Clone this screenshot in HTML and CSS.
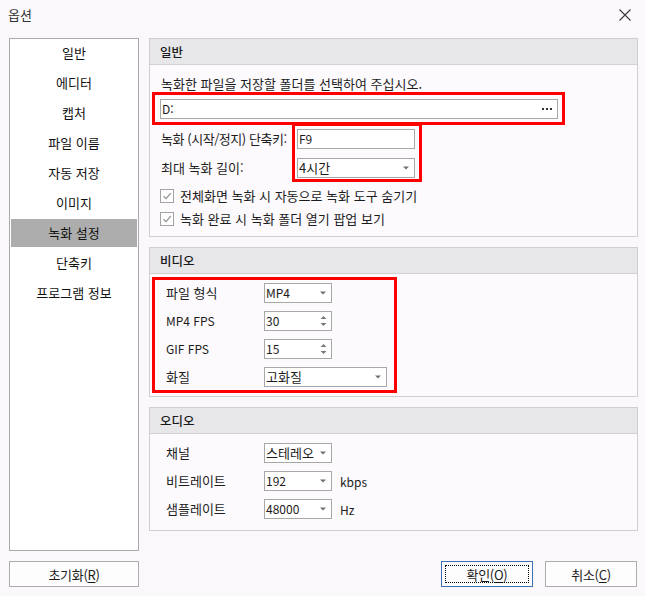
FILE: index.html
```html
<!DOCTYPE html>
<html lang="ko">
<head>
<meta charset="utf-8">
<title>옵션</title>
<link rel="stylesheet" href="styles.css">
</head>
<body>
<div class="window">
  <div class="titlebar">
    <span class="title">옵션</span>
    <svg class="close" width="12" height="12" viewBox="0 0 12 12"><path d="M0.5 0.5 L11.5 11.5 M11.5 0.5 L0.5 11.5" stroke="#3a3a3a" stroke-width="1.1" fill="none"/></svg>
  </div>
  <div class="main">
    <ul class="nav">
      <li>일반</li>
      <li>에디터</li>
      <li>캡처</li>
      <li>파일 이름</li>
      <li>자동 저장</li>
      <li>이미지</li>
      <li class="active">녹화 설정</li>
      <li>단축키</li>
      <li>프로그램 정보</li>
    </ul>
    <div class="content">
      <section class="group">
        <div class="group-head">일반</div>
        <div class="group-body body-general">
          <div class="hint">녹화한 파일을 저장할 폴더를 선택하여 주십시오.</div>
          <div class="mark mark-path">
            <div class="field path-field"><span>D:</span>
              <svg class="dots" width="10" height="2" viewBox="0 0 10 2"><rect x="0" y="0" width="2" height="2" fill="#333"/><rect x="4" y="0" width="2" height="2" fill="#333"/><rect x="8" y="0" width="2" height="2" fill="#333"/></svg>
            </div>
          </div>
          <div class="hotkey-row">
            <div class="hotkey-labels">
              <div class="tight">녹화 (시작/정지) 단축키:</div>
              <div>최대 녹화 길이:</div>
            </div>
            <div class="mark mark-hotkey">
              <div class="field">F9</div>
              <div class="field"><span class="ko">4시간</span><svg class="caret" width="6" height="4" viewBox="0 0 6 4"><path d="M0 0.5 H6 L3 3.5 Z" fill="#707070"/></svg></div>
            </div>
          </div>
          <div class="check"><span class="box"><svg width="12" height="12" viewBox="0 0 12 12"><path d="M2.5 6.2 L5 8.7 L9.8 3.2" stroke="#8a8a8a" stroke-width="1.1" fill="none"/></svg></span><span>전체화면 녹화 시 자동으로 녹화 도구 숨기기</span></div>
          <div class="check"><span class="box"><svg width="12" height="12" viewBox="0 0 12 12"><path d="M2.5 6.2 L5 8.7 L9.8 3.2" stroke="#8a8a8a" stroke-width="1.1" fill="none"/></svg></span><span>녹화 완료 시 녹화 폴더 열기 팝업 보기</span></div>
        </div>
      </section>

      <section class="group">
        <div class="group-head">비디오</div>
        <div class="group-body body-video">
          <div class="mark mark-video">
            <div class="row"><span class="row-label">파일 형식</span><div class="field w68"><span>MP4</span><svg class="caret" width="6" height="4" viewBox="0 0 6 4"><path d="M0 0.5 H6 L3 3.5 Z" fill="#707070"/></svg></div></div>
            <div class="row"><span class="row-label latin">MP4 FPS</span><div class="field w68"><span>30</span><svg class="spin" width="7" height="12" viewBox="0 0 7 12"><path d="M0.5 4 L3.5 1 L6.5 4 Z M0.5 8 L3.5 11 L6.5 8 Z" fill="#7a7a7a"/></svg></div></div>
            <div class="row"><span class="row-label latin">GIF FPS</span><div class="field w68"><span>15</span><svg class="spin" width="7" height="12" viewBox="0 0 7 12"><path d="M0.5 4 L3.5 1 L6.5 4 Z M0.5 8 L3.5 11 L6.5 8 Z" fill="#7a7a7a"/></svg></div></div>
            <div class="row"><span class="row-label">화질</span><div class="field w123"><span class="ko">고화질</span><svg class="caret" width="6" height="4" viewBox="0 0 6 4"><path d="M0 0.5 H6 L3 3.5 Z" fill="#707070"/></svg></div></div>
          </div>
        </div>
      </section>

      <section class="group">
        <div class="group-head">오디오</div>
        <div class="group-body body-audio">
          <div class="row"><span class="row-label">채널</span><div class="field w68"><span class="ko">스테레오</span><svg class="caret" width="6" height="4" viewBox="0 0 6 4"><path d="M0 0.5 H6 L3 3.5 Z" fill="#707070"/></svg></div></div>
          <div class="row"><span class="row-label">비트레이트</span><div class="field w68"><span>192</span><svg class="caret" width="6" height="4" viewBox="0 0 6 4"><path d="M0 0.5 H6 L3 3.5 Z" fill="#707070"/></svg></div><span class="unit">kbps</span></div>
          <div class="row"><span class="row-label">샘플레이트</span><div class="field w68"><span>48000</span><svg class="caret" width="6" height="4" viewBox="0 0 6 4"><path d="M0 0.5 H6 L3 3.5 Z" fill="#707070"/></svg></div><span class="unit">Hz</span></div>
        </div>
      </section>
    </div>
  </div>
  <div class="footer">
    <button class="btn btn-reset">초기화(<u>R</u>)</button>
    <div class="footer-right">
      <button class="btn btn-primary">확인(<u>O</u>)</button>
      <button class="btn">취소(<u>C</u>)</button>
    </div>
  </div>
</div>
</body>
</html>
```

FILE: styles.css
```css
* { box-sizing: border-box; margin: 0; padding: 0; }
html, body { width: 645px; height: 596px; overflow: hidden; }
body {
  background: #faf8fa;
  font-family: "Noto Sans CJK KR", "Noto Sans", sans-serif;
  font-size: 13px;
  color: #1c1c1c;
}
.window { display: flex; flex-direction: column; height: 596px; }

.titlebar {
  height: 38px;
  display: flex;
  justify-content: space-between;
  align-items: flex-start;
  padding: 7px 14px 0 8px;
}
.title { line-height: 16px; color: #333; }
.close { margin-top: 2px; display: block; }

.main { display: flex; gap: 10px; padding-left: 9px; height: 513px; }
.nav {
  width: 130px;
  border: 1px solid #ababab;
  background: #fff;
  list-style: none;
  padding: 0 1px;
}
.nav li {
  height: 28px;
  line-height: 28px;
  margin-bottom: 2px;
  text-align: center;
  color: #111;
}
.nav li.active { background: #adadad; }

.content { width: 489px; display: flex; flex-direction: column; gap: 10px; }
.group { border: 1px solid #cfcfd3; background: #fcfafc; }
.group-head {
  height: 26px;
  line-height: 25px;
  padding-left: 10px;
  background: #e7e6e9;
  border-bottom: 1px solid #d2d1d5;
  color: #1a1a1a;
  font-size: 12.5px;
  font-weight: 500;
}

.mark { border: 3px solid #ff0000; }

.field {
  height: 20px;
  border: 1px solid #a8a8a8;
  background: #fff;
  line-height: 18px;
  padding-left: 1px;
  display: flex;
  align-items: center;
  white-space: nowrap;
  font-size: 12px;
}
.field span { flex: 1; }
.field .ko { font-size: 13px; }
.caret { margin-right: 5px; display: block; }
.spin { margin-right: 4px; display: block; }
.dots { margin-right: 5px; display: block; }

.body-general { padding: 11px 0 10px 11px; }
.hint { line-height: 16px; }
.mark-path { margin-left: -9px; width: 413px; padding: 4px 4px 3px 5px; }

.hotkey-row { display: flex; margin-top: -2px; }
.hotkey-labels {
  width: 131px;
  padding-top: 6px;
  display: flex;
  flex-direction: column;
  gap: 9px;
}
.hotkey-labels div { line-height: 20px; white-space: nowrap; }
.hotkey-labels .tight { letter-spacing: -0.45px; }
.mark-hotkey {
  width: 130px;
  padding: 3px 4px 1px 2px;
  display: flex;
  flex-direction: column;
  gap: 9px;
}

.check {
  display: flex;
  align-items: center;
  gap: 6px;
  height: 14px;
  line-height: 14px;
  margin-left: -1px;
  margin-top: 9px;
}
.hotkey-row + .check { margin-top: 7px; }
.box {
  width: 14px;
  height: 14px;
  border: 1px solid #a3a3a3;
  background: #fff;
  display: block;
}
.box svg { display: block; }

.body-video { padding: 3px 0 3px 2px; }
.mark-video {
  width: 245px;
  padding: 3px 0 3px 11px;
  display: flex;
  flex-direction: column;
  gap: 8px;
}
.row { display: flex; align-items: center; height: 20px; }
.row-label { width: 98px; white-space: nowrap; line-height: 20px; }
.row-label.latin { font-size: 12px; }
.w68 { width: 68px; }
.w123 { width: 123px; }
.unit { margin-left: 8px; font-size: 12px; }

.body-audio {
  padding: 9px 0 11px 16px;
  display: flex;
  flex-direction: column;
  gap: 8px;
}

.footer {
  display: flex;
  justify-content: space-between;
  padding: 0 8px 0 9px;
  margin-top: 10px;
}
.footer-right { display: flex; gap: 12px; }
.btn {
  height: 26px;
  width: 92px;
  border: 1px solid #adadad;
  background: #fdfdfd;
  font: inherit;
  color: #1c1c1c;
  display: flex;
  align-items: center;
  justify-content: center;
  letter-spacing: -0.3px;
}
.btn-reset { width: 130px; }
.btn u { text-decoration: underline; text-underline-offset: 2px; }
.btn-primary { border-color: #3d6db5; position: relative; }
.btn-primary::after {
  content: "";
  position: absolute;
  inset: 3px;
  border: 1px dotted #000;
}
```
